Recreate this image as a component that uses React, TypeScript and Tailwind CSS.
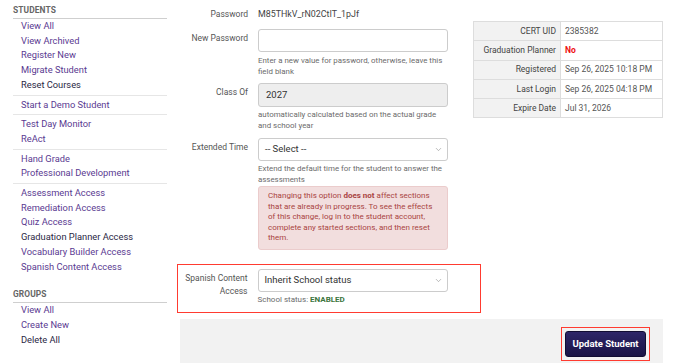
import { ChevronDown } from "lucide-react";

type NavItem = { label: string; dark?: boolean };

const studentGroups: NavItem[][] = [
  [
    { label: "View All" },
    { label: "View Archived" },
    { label: "Register New" },
    { label: "Migrate Student" },
    { label: "Reset Courses", dark: true },
  ],
  [{ label: "Start a Demo Student" }],
  [{ label: "Test Day Monitor" }, { label: "ReAct" }],
  [{ label: "Hand Grade" }, { label: "Professional Development" }],
  [
    { label: "Assessment Access" },
    { label: "Remediation Access" },
    { label: "Quiz Access" },
    { label: "Graduation Planner Access", dark: true },
    { label: "Vocabulary Builder Access" },
    { label: "Spanish Content Access" },
  ],
];

const groupLinks: NavItem[] = [
  { label: "View All" },
  { label: "Create New" },
  { label: "Delete All", dark: true },
];

const info = [
  { label: "CERT UID", value: "2385382" },
  { label: "Graduation Planner", value: "No", alert: true },
  { label: "Registered", value: "Sep 26, 2025 10:18 PM" },
  { label: "Last Login", value: "Sep 26, 2025 04:18 PM" },
  { label: "Expire Date", value: "Jul 31, 2026" },
];

function NavLink({ item }: { item: NavItem }) {
  return (
    <li
      className={`pl-[8px] text-[9.3px] leading-[14.7px] ${
        item.dark ? "text-[#2a2744]" : "text-[#5a3a91]"
      }`}
    >
      {item.label}
    </li>
  );
}

function SectionTitle({ children }: { children: string }) {
  return (
    <h3 className="border-b-[1.5px] border-[#cfcfcf] pb-[2px] text-[8.4px] font-bold leading-[11px] tracking-[0.1px] text-[#666]">
      {children}
    </h3>
  );
}

function Sidebar() {
  return (
    <aside className="w-[180px] shrink-0 pl-[13px] pr-[13px] pt-[5px]">
      <SectionTitle>STUDENTS</SectionTitle>
      {studentGroups.map((group, i) => (
        <ul
          key={i}
          className={i > 0 ? "mt-[2px] border-t border-[#e6e6e6] pt-[2px]" : ""}
        >
          {group.map((item) => (
            <NavLink key={item.label} item={item} />
          ))}
        </ul>
      ))}
      <div className="mt-[15px]">
        <SectionTitle>GROUPS</SectionTitle>
        <ul>
          {groupLinks.map((item) => (
            <NavLink key={item.label} item={item} />
          ))}
        </ul>
      </div>
    </aside>
  );
}

function Select({ value }: { value: string }) {
  return (
    <div className="flex h-[23px] items-center justify-between rounded-[3px] border border-[#cccccc] bg-white pl-[6px] pr-[4px] text-[9.5px] text-[#333]">
      <span>{value}</span>
      <ChevronDown className="h-[9px] w-[9px] text-[#888]" strokeWidth={1.5} />
    </div>
  );
}

function Help({ children, className = "" }: { children: React.ReactNode; className?: string }) {
  return (
    <p className={`text-[7.9px] leading-[11px] text-[#6b6b6b] ${className}`}>{children}</p>
  );
}

function Label({ children, className = "" }: { children: React.ReactNode; className?: string }) {
  return (
    <div className={`text-right text-[8.5px] leading-[10px] text-[#555] ${className}`}>
      {children}
    </div>
  );
}

function StudentForm() {
  return (
    <div className="w-[293px] shrink-0 pt-[8px]">
      <div className="grid grid-cols-[68px_190px] gap-x-[10px]">
        <Label className="leading-[12px]">Password</Label>
        <div className="text-[8.9px] leading-[12px] text-[#444]">M85THkV_rN02CtIT_1pJf</div>

        <Label className="mt-[9px] pt-[4px]">New Password</Label>
        <div className="mt-[9px]">
          <div className="h-[23px] rounded-[3px] border border-[#cccccc] bg-white" />
          <Help className="mt-[3px]">
            Enter a new value for password, otherwise, leave this field blank
          </Help>
        </div>

        <Label className="mt-[6px] pt-[4px]">Class Of</Label>
        <div className="mt-[6px]">
          <div className="flex h-[24px] items-center rounded-[3px] border border-[#cccccc] bg-[#eeeeee] pl-[7px] text-[9.5px] text-[#333]">
            2027
          </div>
          <Help className="mt-[2px]">
            automatically calculated based on the actual grade and school year
          </Help>
        </div>

        <Label className="mt-[7px] pt-[4px]">Extended Time</Label>
        <div className="mt-[7px]">
          <Select value="-- Select --" />
          <Help className="mt-[2px]">
            Extend the default time for the student to answer the assessments
          </Help>
          <div className="mt-[1px] rounded-[3px] border border-[#ebcccc] bg-[#f2dede] px-[9px] pb-[5px] pt-[4px] text-[8px] leading-[10.5px] text-[#a94442]">
            Changing this option <b>does not</b> affect sections that are already in
            progress. To see the effects of this change, log in to the student
            account, complete any started sections, and then reset them.
          </div>
        </div>
      </div>

      <div className="-ml-[3px] mt-[14px] w-[304px] border-[1.5px] border-[#ff3b30] pb-[7px] pl-[1.5px] pt-[4.5px]">
        <div className="grid grid-cols-[68px_190px] gap-x-[10px]">
          <Label className="pt-[3px] leading-[13px]">
            Spanish Content
            <br />
            Access
          </Label>
          <div>
            <Select value="Inherit School status" />
            <p className="mt-[3px] text-[8px] leading-[10px] text-[#6b6b6b]">
              School status: <b className="text-[#3c763d]">ENABLED</b>
            </p>
          </div>
        </div>
      </div>
    </div>
  );
}

function InfoTable() {
  return (
    <table className="mt-[21px] h-fit w-[190px] border-collapse text-[8.5px]">
      <tbody>
        {info.map((row) => (
          <tr key={row.label} className="h-[19.3px]">
            <td className="w-[87px] border border-[#dddddd] bg-[#f2f2f2] pr-[4px] text-right text-[#444]">
              {row.label}
            </td>
            <td
              className={`border border-[#dddddd] bg-white pl-[4px] ${
                row.alert ? "font-bold text-[#ee1111]" : "text-[#555]"
              }`}
            >
              {row.value}
            </td>
          </tr>
        ))}
      </tbody>
    </table>
  );
}

export default function App() {
  return (
    <div className="flex h-[363px] w-[688px] overflow-hidden bg-white font-['Roboto',sans-serif]">
      <Sidebar />
      <main className="flex w-[483px] shrink-0 flex-col">
        <div className="flex">
          <StudentForm />
          <InfoTable />
        </div>
        <div className="mt-[6px] flex flex-1 items-start justify-end bg-[#f2f2f2] pr-[13px] pt-[8px]">
          <div className="border-[1.5px] border-[#ff3b30] p-[3px]">
            <button className="flex h-[26px] w-[81px] items-center justify-center rounded-[3px] border border-[#120d33] bg-gradient-to-b from-[#2e2668] to-[#1a1446] text-[9.5px] font-bold text-white">
              Update Student
            </button>
          </div>
        </div>
      </main>
    </div>
  );
}
